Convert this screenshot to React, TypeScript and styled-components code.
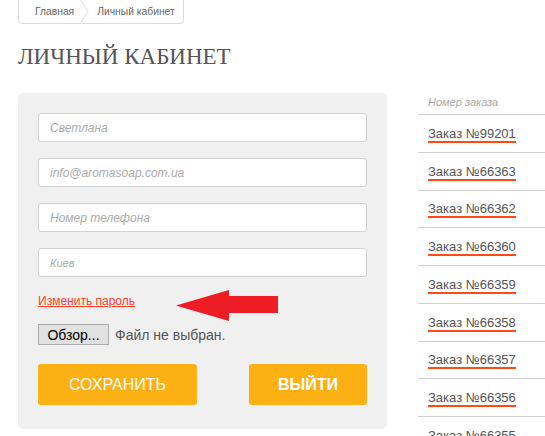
import styled, { createGlobalStyle } from 'styled-components';

const orders = ['99201', '66363', '66362', '66360', '66359', '66358', '66357', '66356', '66355'];

const fields = [
  { placeholder: 'Светлана', size: 12 },
  { placeholder: 'info@aromasoap.com.ua', size: 12 },
  { placeholder: 'Номер телефона', size: 12 },
  { placeholder: 'Киев', size: 11 },
];

const App = () => {
  return (
    <>
      <GlobalStyle />
      <Page>
        <Breadcrumbs>
          <Crumb href="#">Главная</Crumb>
          <Separator width="11" height="25" viewBox="0 0 11 25">
            <polyline points="1,0 9,12.5 1,25" fill="none" stroke="#dcdcdc" strokeWidth="1" />
          </Separator>
          <Crumb href="#">Личный кабинет</Crumb>
        </Breadcrumbs>

        <Title>ЛИЧНЫЙ КАБИНЕТ</Title>

        <Content>
          <Panel>
            {fields.map((field) => (
              <Input key={field.placeholder} placeholder={field.placeholder} fontSize={field.size} />
            ))}

            <LinkRow>
              <PasswordLink href="#">Изменить пароль</PasswordLink>
              <Arrow width="103" height="31" viewBox="0 0 103 31">
                <polygon points="0,15.5 53,0 53,6 102,6 102,23 53,23 53,31" fill="#ee1c25" />
              </Arrow>
            </LinkRow>

            <FileRow>
              <FileButton type="button">Обзор...</FileButton>
              <FileStatus>Файл не выбран.</FileStatus>
            </FileRow>

            <Buttons>
              <ActionButton type="button" width={159}>
                СОХРАНИТЬ
              </ActionButton>
              <ActionButton type="button" width={118} bold>
                ВЫЙТИ
              </ActionButton>
            </Buttons>
          </Panel>

          <Sidebar>
            <SidebarHead>Номер заказа</SidebarHead>
            {orders.map((num) => (
              <OrderRow key={num}>
                <OrderLink href="#">Заказ №{num}</OrderLink>
              </OrderRow>
            ))}
          </Sidebar>
        </Content>
      </Page>
    </>
  );
};

const GlobalStyle = createGlobalStyle`
  html, body {
    margin: 0;
    padding: 0;
    background: #fff;
    overflow: hidden;
  }
  body {
    font-family: 'Liberation Sans', Arial, sans-serif;
  }
`;

const Page = styled.div`
  width: 545px;
  height: 436px;
  padding-left: 18px;
  box-sizing: border-box;
  overflow: hidden;
`;

const Breadcrumbs = styled.nav`
  display: inline-flex;
  align-items: center;
  height: 25px;
  width: 166px;
  box-sizing: border-box;
  margin-top: -1px;
  border: 1px solid #dedede;
  border-radius: 0 0 4px 4px;
  padding-left: 16px;
`;

const Crumb = styled.a`
  font-size: 10.3px;
  color: #666;
  text-decoration: none;
`;

const Separator = styled.svg`
  display: block;
  margin: 0 7px 0 5px;
`;

const Title = styled.h1`
  margin: 19px 0 22px;
  font-family: 'Liberation Serif', 'Times New Roman', serif;
  font-weight: normal;
  font-size: 23px;
  line-height: 28px;
  color: #555;
`;

const Content = styled.div`
  display: flex;
  align-items: flex-start;
`;

const Panel = styled.div`
  width: 369px;
  box-sizing: border-box;
  padding: 20px 20px 24px;
  background: #f0f0f0;
  border-radius: 5px;
  display: flex;
  flex-direction: column;
`;

const Input = styled.input<{ fontSize: number }>`
  height: 29px;
  box-sizing: border-box;
  width: 100%;
  margin: 0 0 16px;
  padding: 0 11px;
  border: 1px solid #d2d2d2;
  border-radius: 3px;
  background: #fff;
  font-family: 'Liberation Sans', Arial, sans-serif;
  font-size: ${(p) => p.fontSize}px;
  font-style: italic;
  outline: none;

  &::placeholder {
    color: #aaa;
  }
`;

const LinkRow = styled.div`
  display: flex;
  align-items: flex-start;
  height: 31px;
  margin-top: -3px;
`;

const PasswordLink = styled.a`
  margin-top: 4px;
  font-size: 12px;
  line-height: 14px;
  color: #ff3d1f;
  text-decoration: underline;
`;

const Arrow = styled.svg`
  display: block;
  margin-left: 41px;
`;

const FileRow = styled.div`
  display: flex;
  align-items: center;
  margin-top: 3px;
  height: 21px;
`;

const FileButton = styled.button`
  width: 71px;
  height: 21px;
  padding: 0;
  border: 1px solid #adadad;
  background: #e1e1e1;
  color: #000;
  font-family: 'Liberation Sans', Arial, sans-serif;
  font-size: 14px;
`;

const FileStatus = styled.span`
  margin-left: 6px;
  font-size: 14px;
  color: #555;
`;

const Buttons = styled.div`
  display: flex;
  justify-content: space-between;
  margin-top: 19px;
`;

const ActionButton = styled.button<{ width: number; bold?: boolean }>`
  width: ${(p) => p.width}px;
  height: 41px;
  border: none;
  border-radius: 3px;
  background: #fdb013;
  color: #fff;
  font-family: 'Liberation Sans', Arial, sans-serif;
  font-size: 16px;
  font-weight: ${(p) => (p.bold ? 'bold' : 'normal')};
`;

const Sidebar = styled.div`
  flex: 1;
  margin-left: 31px;
`;

const SidebarHead = styled.div`
  padding: 2px 0 5px 10px;
  line-height: 14px;
  font-size: 11px;
  font-style: italic;
  color: #aaa;
  border-bottom: 1px solid #d0d0d0;
`;

const OrderRow = styled.div`
  display: flex;
  align-items: center;
  height: 36.75px;
  padding-left: 10px;
  border-bottom: 1px solid #d0d0d0;
`;

const OrderLink = styled.a`
  font-size: 13px;
  line-height: 15px;
  color: #555;
  text-decoration: none;
  border-bottom: 2px solid #ff4a14;
  margin-top: 2px;
`;

export default App;
